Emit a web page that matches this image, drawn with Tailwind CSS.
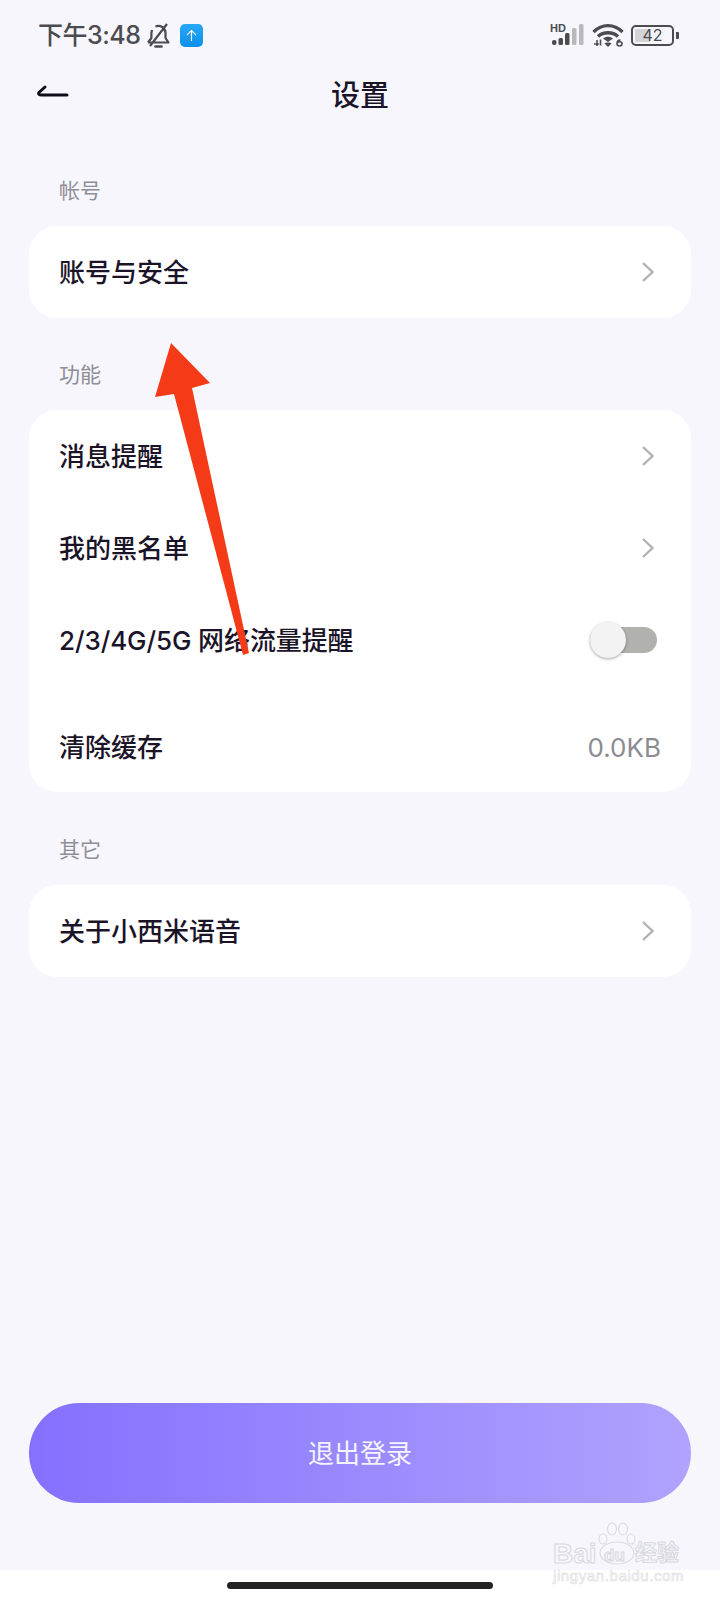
<!DOCTYPE html>
<html lang="zh-CN">
<head>
  <meta charset="UTF-8" />
  <meta name="viewport" content="width=device-width, initial-scale=1.0"/>
  <title>设置</title>
  <script src="https://cdn.jsdelivr.net/npm/@tailwindcss/browser@4"></script>
</head>
<body class="bg-[#f6f6fc] font-['Inter','Noto_Sans_CJK_SC',sans-serif]">
<div class="relative w-[720px] h-[1600px] overflow-hidden flex flex-col text-[#1b1429]">

  <!-- Status bar -->
  <div class="h-[70px] shrink-0 pl-[38px] pr-[41px] flex items-center text-[#4b4b50]">
    <span class="text-[25px] leading-none tracking-[-0.5px] font-medium">下午3:48</span>
    <svg class="ml-[6px]" width="25" height="26" viewBox="0 0 25 26" fill="none" stroke="#4b4b50" stroke-width="2.2">
      <path d="M2 20.5h20.5l-3-4.5V11a7.2 7.2 0 0 0-10-6.6M6 8l-.6 3v5l-3.4 4.5M4 24 L21 2" stroke-linejoin="round"/>
      <path d="M9.5 24.5h6" stroke-width="2.6" stroke-linecap="round"/>
    </svg>
    <div class="ml-[9px] w-[23px] h-[23px] rounded-[5px] bg-gradient-to-b from-[#27a8f5] to-[#0a8fee] flex items-center justify-center">
      <svg width="13" height="13" viewBox="0 0 13 13" fill="none" stroke="#fff" stroke-width="1.1"><path d="M6.5 12V1.5M2 6l4.5-4.5L11 6"/></svg>
    </div>
    <div class="ml-auto flex items-center">
      <div class="relative w-[34px] h-[24px]">
        <span class="absolute left-0 top-[0px] text-[11px] leading-[10px] font-bold font-['Liberation_Sans',sans-serif]">HD</span>
        <svg class="absolute left-0 top-0" width="34" height="24" viewBox="0 0 34 24">
          <rect x="2" y="17" width="4.500" height="5" rx="2" fill="#4b4b50"/>
          <rect x="8.500" y="15" width="4.500" height="7" rx="1.500" fill="#4b4b50"/>
          <rect x="15" y="10" width="4.500" height="12" rx="1.500" fill="#4b4b50"/>
          <rect x="22" y="5" width="4.500" height="17" rx="1.500" fill="#b9b9bc"/>
          <rect x="29" y="1" width="4.500" height="21" rx="1.500" fill="#b9b9bc"/>
        </svg>
      </div>
      <svg class="ml-[8px]" width="32" height="24" viewBox="0 0 32 24" fill="none" stroke="#4b4b50" stroke-width="3.400">
        <path d="M1.500 9C10 .5 22 .5 30.500 9M6 13.500c5.500-5 14.500-5 20 0"/>
        <path d="M11 15.500c3-2.200 7-2.200 10 0L16 19z" fill="#4b4b50" stroke="none"/>
        <path d="M12.500 20.500c1.500-1.200 5.500-1.200 7 0L16 24z" fill="#4b4b50" stroke="none"/>
        <path d="M5 17v6M2 21h5M8.500 16.500v6" stroke-width="1.600"/>
        <path d="M28.500 17c-2.500 0-3.500 1.500-3.500 3.500s1 2.500 2.500 2.500 2.500-1 2.500-2.200-1-2-2.300-2-2.200.7-2.200.7" stroke-width="1.600"/>
      </svg>
      <div class="ml-[7px] w-[43px] h-[21px] rounded-[5px] border-2 border-[#4b4b50] p-[2px] relative">
        <div class="h-full w-[42%] bg-[#d4d4d6] rounded-[1px]"></div>
        <span class="absolute inset-0 flex items-center justify-center text-[16px] leading-none">42</span>
      </div>
      <div class="ml-[2px] w-[3px] h-[7px] rounded-r-[1px] bg-[#4b4b50]"></div>
    </div>
  </div>

  <!-- Title bar -->
  <div class="relative h-[50px] shrink-0 flex items-center justify-center">
    <svg class="absolute left-[36px] top-[14px]" width="34" height="18" viewBox="0 0 34 18" fill="none" stroke="#100c18" stroke-width="3" stroke-linecap="round">
      <path d="M31 11H5Q1.500 10.500 3 8.500L9 3"/>
    </svg>
    <h1 class="text-[29px] leading-none font-medium">设置</h1>
  </div>

  <!-- Account -->
  <div class="h-[106px] shrink-0 pl-[59px] flex items-end pb-[25px] text-[21px] leading-none text-[#8e8e96]">帐号</div>
  <div class="mx-[29px] h-[92px] shrink-0 bg-white rounded-[28px] pl-[30px] pr-[36px] flex items-center justify-between text-[26px] font-medium">
    <span>账号与安全</span>
    <svg width="14" height="22" viewBox="0 0 14 22" fill="none" stroke="#b0b0b6" stroke-width="2.400"><path d="M2 2l9.500 9L2 20"/></svg>
  </div>

  <!-- Features -->
  <div class="h-[92px] shrink-0 pl-[59px] flex items-end pb-[25px] text-[21px] leading-none text-[#8e8e96]">功能</div>
  <div class="mx-[29px] h-[382px] shrink-0 bg-white rounded-[28px] pl-[30px] pr-[36px] flex flex-col text-[26px] font-medium">
    <div class="h-[92px] shrink-0 flex items-center justify-between">
      <span>消息提醒</span>
      <svg width="14" height="22" viewBox="0 0 14 22" fill="none" stroke="#b0b0b6" stroke-width="2.400"><path d="M2 2l9.500 9L2 20"/></svg>
    </div>
    <div class="h-[92px] shrink-0 flex items-center justify-between">
      <span>我的黑名单</span>
      <svg width="14" height="22" viewBox="0 0 14 22" fill="none" stroke="#b0b0b6" stroke-width="2.400"><path d="M2 2l9.500 9L2 20"/></svg>
    </div>
    <div class="h-[92px] shrink-0 flex items-center justify-between">
      <span class="tracking-[-0.100px]">2/3/4G/5G 网络流量提醒</span>
      <div class="relative w-[67px] h-[26px] -mr-[2px] rounded-full bg-[#b1b1ae]">
        <div class="absolute left-0 top-[-5px] w-[36px] h-[36px] rounded-full bg-[#f3f3f3] shadow-[0_1px_3px_rgba(0,0,0,0.35)]"></div>
      </div>
    </div>
    <div class="h-[106px] shrink-0 pt-[19px] flex items-center justify-between">
      <span class="pb-[2px]">清除缓存</span>
      <span class="text-[#8b8b92] text-[26px] font-normal pb-[2px] -mr-[6px]">0.0KB</span>
    </div>
  </div>

  <!-- Other -->
  <div class="h-[93px] shrink-0 pl-[59px] flex items-end pb-[25px] text-[21px] leading-none text-[#8e8e96]">其它</div>
  <div class="mx-[29px] h-[92px] shrink-0 bg-white rounded-[28px] pl-[30px] pr-[36px] flex items-center justify-between text-[26px] font-medium">
    <span>关于小西米语音</span>
    <svg width="14" height="22" viewBox="0 0 14 22" fill="none" stroke="#b0b0b6" stroke-width="2.400"><path d="M2 2l9.500 9L2 20"/></svg>
  </div>

  <!-- Logout -->
  <button class="mx-[29px] mt-[426px] h-[100px] shrink-0 rounded-full bg-gradient-to-r from-[#8470fe] to-[#b0a2fd] text-white/90 text-[26px]">退出登录</button>

  <!-- Gesture area -->
  <div class="mt-auto h-[30px] shrink-0 bg-white flex justify-center pt-[12px]">
    <div class="w-[266px] h-[7px] rounded-full bg-[#232325]"></div>
  </div>

  <!-- Baidu watermark -->
  <div class="absolute left-[553px] top-[1522px] w-[130px] h-[62px] text-transparent">
    <svg class="absolute left-[44px] top-0" width="40" height="44" viewBox="0 0 40 44" fill="none" stroke="#dcdce2" stroke-width="1.200">
      <ellipse cx="6" cy="17" rx="4" ry="5"/><ellipse cx="15" cy="7" rx="4.500" ry="6"/><ellipse cx="26" cy="7" rx="4.500" ry="6"/><ellipse cx="34" cy="17" rx="4" ry="5"/>
      <ellipse cx="20" cy="31" rx="17" ry="11"/>
    </svg>
    <span class="absolute left-0 top-[18px] text-[28px] leading-none font-bold font-['Liberation_Sans',sans-serif] [-webkit-text-stroke:1px_#d8d8de]">Bai</span>
    <span class="absolute left-[51px] top-[25px] text-[17px] leading-none font-bold font-['Liberation_Sans',sans-serif] [-webkit-text-stroke:1px_#d8d8de]">du</span>
    <span class="absolute left-[82px] top-[19px] text-[22px] leading-none font-bold [-webkit-text-stroke:1px_#d8d8de]">经验</span>
    <span class="absolute left-0 top-[46px] text-[15px] leading-none font-['Liberation_Sans',sans-serif] tracking-[0.600px] [-webkit-text-stroke:0.700px_#e0e0e4]">jingyan.baidu.com</span>
  </div>

  <!-- Red arrow annotation -->
  <svg class="absolute left-0 top-0 pointer-events-none" width="720" height="1600" viewBox="0 0 720 1600">
    <path d="M171 343L210 383L192 388L249 653L243 655L174 394L155 397Z" fill="#f53a17"/>
  </svg>
</div>
</body>
</html>
